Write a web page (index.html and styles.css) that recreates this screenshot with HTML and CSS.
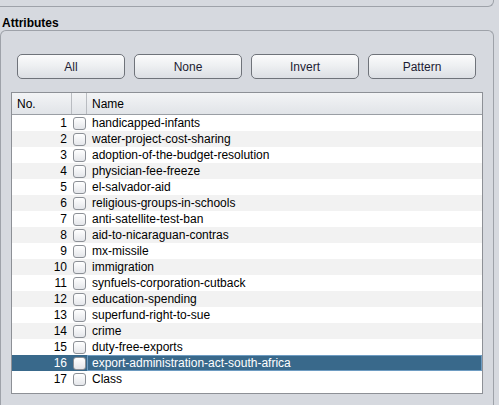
FILE: index.html
```html
<!DOCTYPE html>
<html>
<head>
<meta charset="utf-8">
<link rel="stylesheet" href="styles.css">
</head>
<body>
<div class="top-panel"></div>
<div class="title">Attributes</div>
<div class="panel">
  <div class="buttons">
    <button class="btn">All</button>
    <button class="btn">None</button>
    <button class="btn">Invert</button>
    <button class="btn">Pattern</button>
  </div>
  <div class="table">
    <div class="head">
      <div class="hcell hno">No.</div>
      <div class="hcell hchk"></div>
      <div class="hcell hname">Name</div>
    </div>
    <div class="body">
      <div class="row"><div class="no">1</div><div class="chk"><span class="box"></span></div><div class="name">handicapped-infants</div></div>
      <div class="row"><div class="no">2</div><div class="chk"><span class="box"></span></div><div class="name">water-project-cost-sharing</div></div>
      <div class="row"><div class="no">3</div><div class="chk"><span class="box"></span></div><div class="name">adoption-of-the-budget-resolution</div></div>
      <div class="row"><div class="no">4</div><div class="chk"><span class="box"></span></div><div class="name">physician-fee-freeze</div></div>
      <div class="row"><div class="no">5</div><div class="chk"><span class="box"></span></div><div class="name">el-salvador-aid</div></div>
      <div class="row"><div class="no">6</div><div class="chk"><span class="box"></span></div><div class="name">religious-groups-in-schools</div></div>
      <div class="row"><div class="no">7</div><div class="chk"><span class="box"></span></div><div class="name">anti-satellite-test-ban</div></div>
      <div class="row"><div class="no">8</div><div class="chk"><span class="box"></span></div><div class="name">aid-to-nicaraguan-contras</div></div>
      <div class="row"><div class="no">9</div><div class="chk"><span class="box"></span></div><div class="name">mx-missile</div></div>
      <div class="row"><div class="no">10</div><div class="chk"><span class="box"></span></div><div class="name">immigration</div></div>
      <div class="row"><div class="no">11</div><div class="chk"><span class="box"></span></div><div class="name">synfuels-corporation-cutback</div></div>
      <div class="row"><div class="no">12</div><div class="chk"><span class="box"></span></div><div class="name">education-spending</div></div>
      <div class="row"><div class="no">13</div><div class="chk"><span class="box"></span></div><div class="name">superfund-right-to-sue</div></div>
      <div class="row"><div class="no">14</div><div class="chk"><span class="box"></span></div><div class="name">crime</div></div>
      <div class="row"><div class="no">15</div><div class="chk"><span class="box"></span></div><div class="name">duty-free-exports</div></div>
      <div class="row selected"><div class="no">16</div><div class="chk"><span class="box"></span></div><div class="name">export-administration-act-south-africa</div></div>
      <div class="row"><div class="no">17</div><div class="chk"><span class="box"></span></div><div class="name">Class</div></div>
    </div>
  </div>
</div>
</body>
</html>
```
FILE: styles.css
```css
* { box-sizing: border-box; }
html, body {
  margin: 0;
  padding: 0;
  background: #d6d9df;
  overflow: hidden;
  height: 405px;
}
body {
  font-family: "Liberation Sans", Arial, sans-serif;
  font-size: 12px;
  color: #000;
}
.top-panel {
  margin-left: -10px;
  width: 504px;
  height: 7px;
  border: 1px solid #9ea2a9;
  border-top: none;
  border-radius: 0 0 6px 6px;
}
.title {
  height: 23px;
  padding: 9px 0 0 2px;
  line-height: 14px;
  font-weight: bold;
  color: #000;
}
.panel {
  width: 494px;
  height: 375px;
  border: 1px solid #9ea2a9;
  border-bottom: none;
  border-radius: 6px 6px 0 0;
  padding: 23px 10px 0 10px;
}
.buttons {
  display: flex;
  gap: 9px;
  padding-left: 6px;
  margin-bottom: 13px;
}
.btn {
  width: 108px;
  height: 25px;
  margin: 0;
  padding: 0;
  border: 1px solid #6f737a;
  border-radius: 5px;
  background: linear-gradient(#fbfbfc 0%, #eef0f2 45%, #dcdfe4 100%);
  font-family: "Liberation Sans", Arial, sans-serif;
  font-size: 12px;
  color: #1c1c33;
  display: flex;
  align-items: center;
  justify-content: center;
}
.table {
  width: 472px;
  height: 302px;
  border: 1px solid #8d9096;
  background: #fff;
}
.head {
  display: grid;
  grid-template-columns: 60px 15px 1fr;
  height: 22px;
  border-bottom: 1px solid #9a9ea4;
  background: linear-gradient(#f3f4f6, #e1e4e8);
}
.hcell {
  display: flex;
  align-items: center;
  padding-left: 5px;
  line-height: 14px;
  color: #000;
}
.hno, .hchk { border-right: 1px solid #b9bcc1; }
.body { background: #fff; }
.row {
  display: grid;
  grid-template-columns: 60px 15px 1fr;
  height: 16px;
  line-height: 16px;
}
.row:nth-child(even) { background: #f2f2f2; }
.no {
  text-align: right;
  padding-right: 5px;
}
.chk {
  display: flex;
  align-items: center;
  padding-left: 1px;
}
.box {
  width: 13px;
  height: 13px;
  border: 1px solid #8c9096;
  border-radius: 3px;
  background: linear-gradient(#ffffff, #e4e6ea);
}
.name {
  padding-left: 5px;
  white-space: nowrap;
}
.row.selected {
  background: #39698b;
  color: #fff;
}
.row.selected .name {
  border: 1px solid #6e9cc2;
  padding-left: 4px;
  line-height: 14px;
}
```
